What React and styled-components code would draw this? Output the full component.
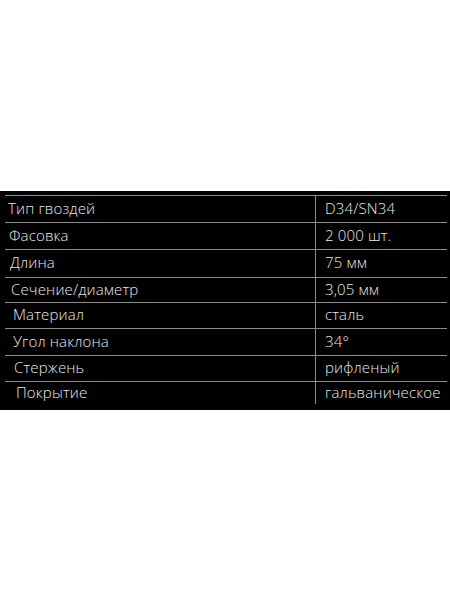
import React from "react";
import styled, { createGlobalStyle } from "styled-components";

const Global = createGlobalStyle`
  html, body { margin: 0; padding: 0; background: #fff; }
  #root { min-height: 100vh; }
`;

const Page = styled.div`
  min-height: 100vh;
  display: flex;
  align-items: center;
`;

const Band = styled.div`
  width: 100%;
  background: #000;
  padding: 4px 3px 8px 5px;
  box-sizing: border-box;
`;

const Table = styled.div`
  border-top: 1px solid #8d8d8d;
  font-family: "Open Sans", Inter, sans-serif;
  font-size: 15px;
  font-weight: 300;
  letter-spacing: 0.15px;
  color: #e8e8e8;
`;

const Row = styled.div`
  display: grid;
  grid-template-columns: 311px 1fr;
  height: ${p => p.h}px;
  border-bottom: ${p => (p.last ? "none" : "1px solid #8d8d8d")};
  box-sizing: border-box;
`;

const Label = styled.div`
  display: flex;
  align-items: center;
  padding-left: ${p => p.indent}px;
  padding-bottom: 2px;
  border-right: 1px solid #8d8d8d;
  white-space: nowrap;
`;

const Value = styled.div`
  display: flex;
  align-items: center;
  padding-left: 9px;
  padding-bottom: 2px;
  white-space: nowrap;
`;

const rows = [
  ["Тип гвоздей", "D34/SN34", 3, 27],
  ["Фасовка", "2 000 шт.", 4, 27],
  ["Длина", "75 мм", 5, 28],
  ["Сечение/диаметр", "3,05 мм", 6, 25],
  ["Материал", "сталь", 8, 26],
  ["Угол наклона", "34°", 8, 27],
  ["Стержень", "рифленый", 9, 26],
  ["Покрытие", "гальваническое", 11, 20],
];

export default function App() {
  return (
    <>
      <Global />
      <Page>
        <Band>
          <Table>
            {rows.map(([k, v, indent, h], i) => (
              <Row key={k} h={h} last={i === rows.length - 1}>
                <Label indent={indent}>{k}</Label>
                <Value>{v}</Value>
              </Row>
            ))}
          </Table>
        </Band>
      </Page>
    </>
  );
}
